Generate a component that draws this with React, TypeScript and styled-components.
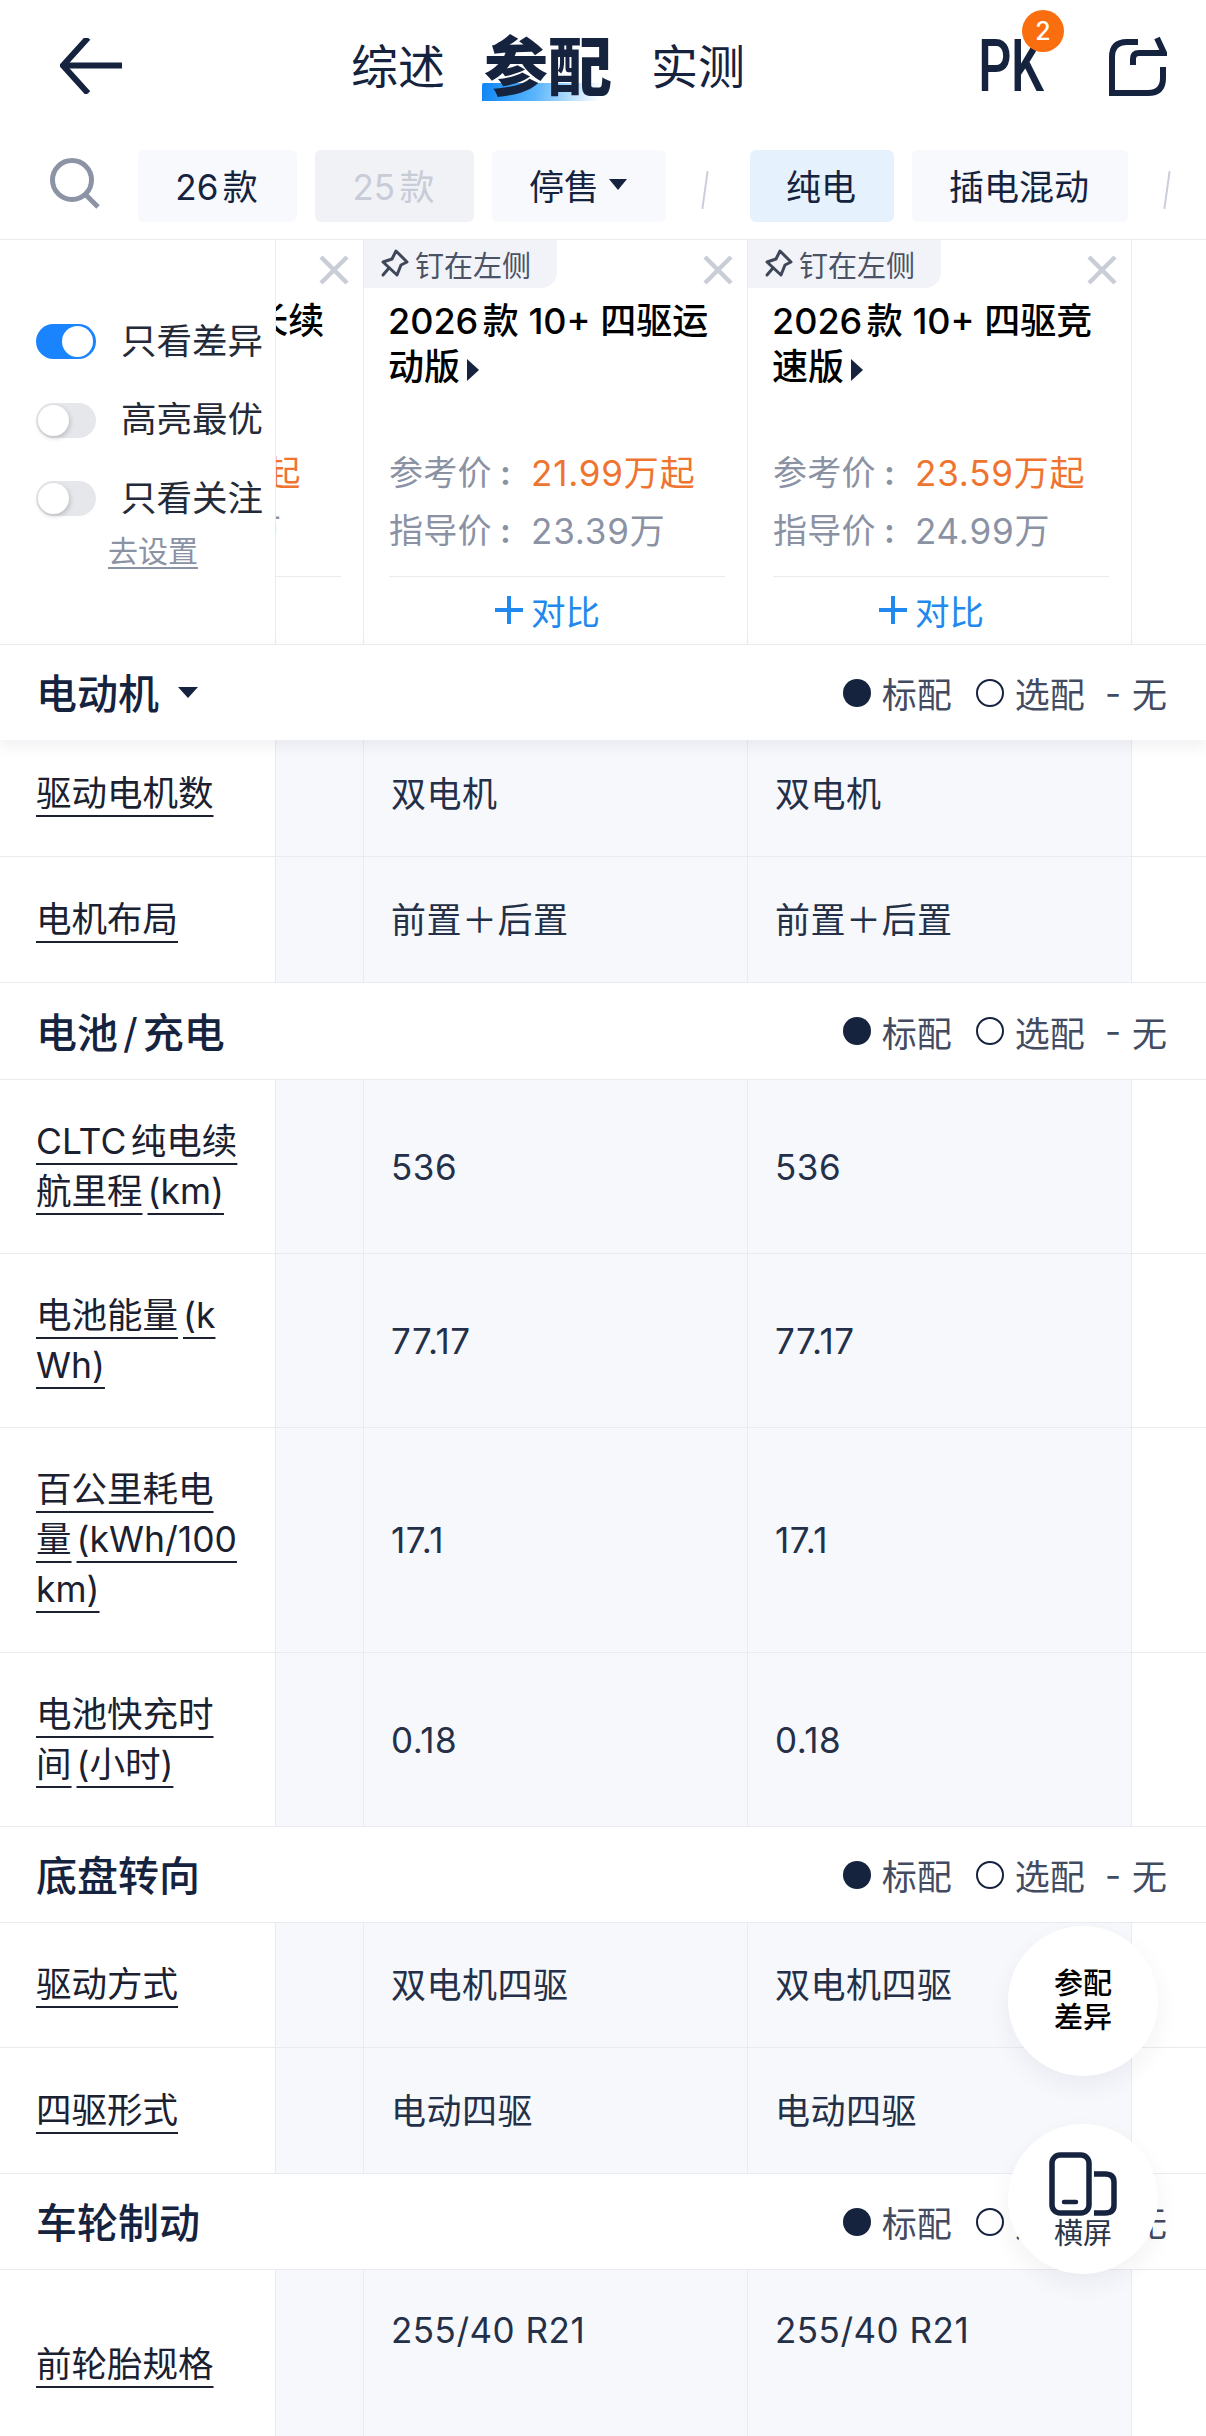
import React from "react";
import styled, { createGlobalStyle } from "styled-components";

const NAVY = "#15233f";
const LINE = "#e9ebf0";
const CELL = "#f7f8fc";
const FONT = `Inter, "Noto Sans CJK SC", sans-serif`;
const COLS = "276px 88px 384px 384px 1fr";

const Global = createGlobalStyle`
  html, body { margin: 0; padding: 0; background: #fff; }
  body { font-family: ${FONT}; color: ${NAVY}; text-autospace: normal; }
  * { box-sizing: border-box; }
`;

const Page = styled.div`
  width: 1206px;
  height: 2436px;
  overflow: hidden;
  position: relative;
  background: #fff;
`;

const TopBar = styled.header`
  height: 132px;
  display: flex;
  align-items: center;
  padding: 0 39px 0 60px;
`;
const BackIcon = styled.svg`
  width: 62px;
  height: 56px;
  flex: none;
  color: ${NAVY};
`;
const Tabs = styled.nav`
  margin: 2px 0 0 229px;
  display: flex;
  align-items: center;
  gap: 39px;
`;
const Tab = styled.span<{ $active?: boolean }>`
  position: relative;
  font-size: ${(p) => (p.$active ? 64 : 47)}px;
  font-weight: ${(p) => (p.$active ? 800 : 400)};
  line-height: 70px;
  color: ${NAVY};
  z-index: 0;
  ${(p) =>
    p.$active &&
    `&::after {
      content: "";
      position: absolute;
      z-index: -1;
      left: -2px;
      width: 117px;
      top: 51px;
      height: 18px;
      border-radius: 2px 0 0 0;
      background: linear-gradient(100deg, #0f86f5 0%, #58b4fb 45%, #ffffff 100%);
    }`}
`;
const RightTools = styled.div`
  margin-left: auto;
  display: flex;
  align-items: center;
  gap: 65px;
`;
const Pk = styled.div`
  position: relative;
  width: 64px;
  height: 52px;
`;
const PkText = styled.span`
  display: block;
  font-family: Roboto, sans-serif;
  font-size: 73px;
  line-height: 52px;
  font-weight: 500;
  transform: scaleX(0.72);
  transform-origin: left center;
  white-space: nowrap;
  color: ${NAVY};
  letter-spacing: -1px;
`;
const Badge = styled.span`
  position: absolute;
  left: 44px;
  top: -30px;
  width: 42px;
  height: 42px;
  border-radius: 50%;
  background: #fb6e0f;
  color: #fff;
  font-size: 25px;
  font-weight: 500;
  display: flex;
  align-items: center;
  justify-content: center;
`;
const ShareIcon = styled.svg`
  width: 60px;
  height: 60px;
  color: ${NAVY};
  flex: none;
`;

const FilterBar = styled.div`
  height: 108px;
  border-bottom: 1px solid ${LINE};
  display: flex;
  align-items: flex-start;
  padding: 18px 0 0 49px;
`;
const SearchIcon = styled.svg`
  width: 52px;
  height: 52px;
  margin: 7px 37px 0 0;
  flex: none;
  color: #8c93a5;
`;
const Chip = styled.span<{ $w: number; $state?: "off" | "on" }>`
  width: ${(p) => p.$w}px;
  height: 72px;
  margin-right: 18px;
  padding: 0 2px 3px 0;
  border-radius: 6px;
  flex: none;
  display: flex;
  align-items: center;
  justify-content: center;
  gap: 10px;
  font-size: 35px;
  white-space: nowrap;
  background: ${(p) => (p.$state === "off" ? "#f1f2f6" : p.$state === "on" ? "#e5f2fd" : "#f7f9fc")};
  color: ${(p) => (p.$state === "off" ? "#c8ccd6" : NAVY)};
`;
const ChipCaret = styled.i`
  width: 0;
  height: 0;
  border-left: 9px solid transparent;
  border-right: 9px solid transparent;
  border-top: 11px solid ${NAVY};
`;
const Slash = styled.span`
  width: 2px;
  height: 38px;
  margin: 21px 44px 0 20px;
  background: #c9ced8;
  transform: rotate(8deg);
  flex: none;
`;

const Row = styled.div<{ $h?: number; $tuck?: boolean }>`
  display: grid;
  grid-template-columns: ${COLS};
  height: ${(p) => p.$h ?? 126}px;
  border-top: 1px solid ${LINE};
  margin-top: ${(p) => (p.$tuck ? -10 : 0)}px;
`;
const Head = styled.div`
  display: grid;
  grid-template-columns: ${COLS};
  height: 404px;
`;
const SidePanel = styled.div`
  background: #fff;
  border-right: 1px solid ${LINE};
  padding: 84px 0 0 36px;
  display: flex;
  flex-direction: column;
`;
const ToggleRow = styled.div`
  display: flex;
  align-items: center;
  height: 35px;
  gap: 25px;
  margin-bottom: 43.5px;
  font-size: 35.5px;
  white-space: nowrap;
  color: #242a38;
`;
const ToggleLabel = styled.span`
  margin-top: -7px;
`;
const Track = styled.span<{ $on?: boolean }>`
  position: relative;
  width: 60px;
  height: 35px;
  border-radius: 18px;
  flex: none;
  background: ${(p) => (p.$on ? "#1a84ff" : "#e6e7eb")};
`;
const Knob = styled.span<{ $on?: boolean }>`
  position: absolute;
  top: 2px;
  left: ${(p) => (p.$on ? 26 : 2)}px;
  width: 31px;
  height: 31px;
  border-radius: 50%;
  background: #fff;
  box-shadow: ${(p) => (p.$on ? "none" : "1px 2px 5px rgba(0,0,0,.2)")};
`;
const SetupLink = styled.span`
  margin: -25px 0 0 72px;
  font-size: 30px;
  line-height: 32px;
  width: fit-content;
  color: #8a92a4;
  border-bottom: 2px solid #8a92a4;
`;
const ClipSlot = styled.div`
  overflow: hidden;
  display: flex;
  justify-content: flex-end;
`;
const CarCard = styled.div`
  position: relative;
  width: 384px;
  flex: none;
  border-right: 1px solid ${LINE};
  display: flex;
  flex-direction: column;
`;
const PinTab = styled.div`
  width: 193px;
  height: 48px;
  background: #f1f3f8;
  border-radius: 0 0 16px 0;
  display: flex;
  align-items: center;
  padding-left: 15px;
  gap: 6px;
  font-size: 29px;
  color: #4a5266;
  white-space: nowrap;
`;
const PinIcon = styled.svg`
  width: 30px;
  height: 32px;
  flex: none;
  color: #3f4759;
`;
const CloseIcon = styled.svg`
  position: absolute;
  right: 14px;
  top: 15px;
  width: 30px;
  height: 30px;
  color: #c9ced6;
`;
const CarTitle = styled.div`
  margin: 10px 25px 0 24px;
  height: 92px;
  font-size: 36px;
  line-height: 46px;
  font-weight: 500;
  color: #000;
`;
const TitleCaret = styled.i`
  display: inline-block;
  margin-left: 7px;
  width: 0;
  height: 0;
  border-top: 11px solid transparent;
  border-bottom: 11px solid transparent;
  border-left: 12px solid ${NAVY};
  vertical-align: -1px;
`;
const PriceBlock = styled.div`
  margin: 52px 0 0 25px;
`;
const PriceRow = styled.div`
  height: 57.5px;
  display: flex;
  align-items: center;
  font-size: 35px;
  white-space: nowrap;
  color: #8a92a4;
  text-autospace: no-autospace;
  letter-spacing: 0.8px;
`;
const PriceLabel = styled.span`
  width: 142px;
  flex: none;
  font-size: 34px;
  letter-spacing: 0.3px;
`;
const Colon = styled.span`
  margin-left: 8px;
  font-weight: 600;
`;
const Hot = styled.span`
  color: #ee7430;
`;
const CardFoot = styled.div`
  margin: 19px 22px 0 25px;
  padding-right: 20px;
  border-top: 1px solid ${LINE};
  height: 66px;
  display: flex;
  align-items: center;
  justify-content: center;
  gap: 7px;
  font-size: 34.5px;
  color: #2189ee;
`;
const PlusIcon = styled.svg`
  width: 30px;
  height: 30px;
  color: #2189ee;
`;
const HeadEnd = styled.div``;

const SectionBar = styled.div<{ $raised?: boolean; $h?: number }>`
  position: relative;
  z-index: ${(p) => (p.$raised ? 2 : 0)};
  height: ${(p) => p.$h ?? 96}px;
  background: #fff;
  border-top: 1px solid ${LINE};
  display: flex;
  align-items: center;
  justify-content: space-between;
  padding: 0 39px 0 36px;
  box-shadow: ${(p) => (p.$raised ? "0 6px 14px rgba(30,40,70,.07)" : "none")};
`;
const SectionTitle = styled.div`
  font-size: 41px;
  font-weight: 500;
  display: flex;
  align-items: center;
  gap: 19px;
  padding-bottom: 3px;
  color: ${NAVY};
`;
const SlashMark = styled.span`
  margin: 0 5px;
  font-weight: 400;
`;
const TitleDown = styled.i`
  width: 0;
  height: 0;
  border-left: 10px solid transparent;
  border-right: 10px solid transparent;
  border-top: 11px solid ${NAVY};
  margin-top: 2px;
`;
const Legend = styled.div`
  display: flex;
  align-items: center;
  font-size: 35px;
  color: #424b5f;
  white-space: nowrap;
`;
const Dot = styled.i<{ $hollow?: boolean }>`
  width: 28px;
  height: 28px;
  border-radius: 50%;
  margin-right: 11px;
  background: ${(p) => (p.$hollow ? "#fff" : NAVY)};
  border: ${(p) => (p.$hollow ? `2px solid ${NAVY}` : "none")};
`;
const LegendItem = styled.span<{ $gap: number }>`
  margin-right: ${(p) => p.$gap}px;
`;
const Dash = styled.span`
  margin-right: 11px;
`;

const LabelCell = styled.div`
  background: #fff;
  border-right: 1px solid ${LINE};
  padding: 0 0 0 36px;
  display: flex;
  align-items: center;
`;
const LabelText = styled.div`
  width: 211px;
  font-size: 35.5px;
  line-height: 50px;
  word-break: break-all;
  color: #1b2130;
`;
const Ul = styled.span`
  text-decoration: underline;
  text-decoration-thickness: 2px;
  text-underline-offset: 9px;
  text-decoration-skip-ink: none;
  & + & { margin-left: 5px; }
`;
const Spacer = styled.div`
  background: ${CELL};
  border-right: 1px solid ${LINE};
`;
const ValueCell = styled.div<{ $top?: boolean }>`
  background: ${CELL};
  border-right: 1px solid ${LINE};
  padding: ${(p) => (p.$top ? "37px 0 0 27px" : "0 0 0 27px")};
  display: flex;
  align-items: ${(p) => (p.$top ? "flex-start" : "center")};
  font-size: 35px;
  line-height: 46px;
  letter-spacing: 0.5px;
  color: #243048;
`;
const Blank = styled.div`
  background: #fff;
`;

const FloatStack = styled.div`
  position: absolute;
  right: 48px;
  bottom: 162px;
  z-index: 5;
  display: flex;
  flex-direction: column;
  gap: 48px;
`;
const FloatButton = styled.div`
  width: 150px;
  height: 150px;
  border-radius: 50%;
  background: #fff;
  box-shadow: 0 10px 24px rgba(30, 40, 70, 0.06);
  display: flex;
  flex-direction: column;
  align-items: center;
  justify-content: center;
  font-size: 29px;
  line-height: 34px;
  color: #000;
  font-weight: 500;
`;
const RotateIcon = styled.svg`
  width: 68px;
  height: 64px;
  margin-top: 4px;
  color: ${NAVY};
`;
const RotateLabel = styled.span`
  color: #2a3448;
  font-weight: 400;
  margin-top: 1px;
`;

const LegendBlock = () => (
  <Legend>
    <Dot />
    <LegendItem $gap={24}>标配</LegendItem>
    <Dot $hollow />
    <LegendItem $gap={20}>选配</LegendItem>
    <Dash>-</Dash>
    无
  </Legend>
);

const Card = ({ name, price, guide }: { name: string; price: string; guide: string }) => (
  <CarCard>
    <PinTab>
      <PinIcon viewBox="0 0 30 32" fill="none" stroke="currentColor" strokeWidth="3" strokeLinejoin="round">
        <path d="M17 3 L28 14 L22 17 L18 27 L4 14 L13 11 Z" />
        <path d="M10 20 L4 27" strokeLinecap="round" />
      </PinIcon>
      钉在左侧
    </PinTab>
    <CloseIcon viewBox="0 0 30 30" stroke="currentColor" strokeWidth="4.5" fill="none">
      <path d="M2 2 L28 28 M28 2 L2 28" />
    </CloseIcon>
    <CarTitle>
      {name}
      <TitleCaret />
    </CarTitle>
    <PriceBlock>
      <PriceRow>
        <PriceLabel>
          参考价<Colon>:</Colon>
        </PriceLabel>
        <Hot>{price}</Hot>
      </PriceRow>
      <PriceRow>
        <PriceLabel>
          指导价<Colon>:</Colon>
        </PriceLabel>
        {guide}
      </PriceRow>
    </PriceBlock>
    <CardFoot>
      <PlusIcon viewBox="0 0 30 30" stroke="currentColor" strokeWidth="4" fill="none">
        <path d="M15 1 V29 M1 15 H29" />
      </PlusIcon>
      对比
    </CardFoot>
  </CarCard>
);

const Toggle = ({ on, label }: { on?: boolean; label: string }) => (
  <ToggleRow>
    <Track $on={on}>
      <Knob $on={on} />
    </Track>
    <ToggleLabel>{label}</ToggleLabel>
  </ToggleRow>
);

const SpecRow = ({
  h,
  tuck,
  label,
  value,
  top,
}: {
  h?: number;
  tuck?: boolean;
  label: string[];
  value: string;
  top?: boolean;
}) => (
  <Row $h={h} $tuck={tuck}>
    <LabelCell>
      <LabelText>
        {label.map((t) => (
          <Ul key={t}>{t}</Ul>
        ))}
      </LabelText>
    </LabelCell>
    <Spacer />
    <ValueCell $top={top}>{value}</ValueCell>
    <ValueCell $top={top}>{value}</ValueCell>
    <Blank />
  </Row>
);

export default function App() {
  return (
    <Page>
      <Global />
      <TopBar>
        <BackIcon viewBox="0 0 62 56" fill="none" stroke="currentColor" strokeWidth="6">
          <path d="M26 2 L3 27.5 L26 53" strokeLinecap="square" />
          <path d="M5 27.5 H62" />
        </BackIcon>
        <Tabs>
          <Tab>综述</Tab>
          <Tab $active>参配</Tab>
          <Tab>实测</Tab>
        </Tabs>
        <RightTools>
          <Pk>
            <PkText>PK</PkText>
            <Badge>2</Badge>
          </Pk>
          <ShareIcon viewBox="0 0 60 60" fill="none" stroke="currentColor" strokeWidth="6">
            <path d="M31 6 H20 Q5 6 5 21 V57 H41 Q56 57 56 42 V31" />
            <path d="M26 29 V23 Q26 17 32 17 H57 L50 2" />
          </ShareIcon>
        </RightTools>
      </TopBar>

      <FilterBar>
        <SearchIcon viewBox="0 0 52 52" fill="none" stroke="currentColor" strokeWidth="5">
          <circle cx="23" cy="23" r="19.5" />
          <path d="M36 37 L49 50" />
        </SearchIcon>
        <Chip $w={159}>26款</Chip>
        <Chip $w={159} $state="off">
          25款
        </Chip>
        <Chip $w={174}>
          停售
          <ChipCaret />
        </Chip>
        <Slash />
        <Chip $w={144} $state="on">
          纯电
        </Chip>
        <Chip $w={216}>插电混动</Chip>
        <Slash />
      </FilterBar>

      <Head>
        <SidePanel>
          <Toggle on label="只看差异" />
          <Toggle label="高亮最优" />
          <Toggle label="只看关注" />
          <SetupLink>去设置</SetupLink>
        </SidePanel>
        <ClipSlot>
          <Card name="2026款 10+ 超长续航版" price="21.19万起" guide="22.89万" />
        </ClipSlot>
        <Card name="2026款 10+ 四驱运动版" price="21.99万起" guide="23.39万" />
        <Card name="2026款 10+ 四驱竞速版" price="23.59万起" guide="24.99万" />
        <HeadEnd />
      </Head>

      <SectionBar $raised>
        <SectionTitle>
          电动机
          <TitleDown />
        </SectionTitle>
        <LegendBlock />
      </SectionBar>
      <SpecRow tuck label={["驱动电机数"]} value="双电机" />
      <SpecRow label={["电机布局"]} value="前置＋后置" />

      <SectionBar $h={97}>
        <SectionTitle>
          <span>
            电池<SlashMark>/</SlashMark>充电
          </span>
        </SectionTitle>
        <LegendBlock />
      </SectionBar>
      <SpecRow h={174} label={["CLTC纯电续航里程", "(km)"]} value="536" />
      <SpecRow h={174} label={["电池能量", "(kWh)"]} value="77.17" />
      <SpecRow h={225} label={["百公里耗电量", "(kWh/100km)"]} value="17.1" />
      <SpecRow h={174} label={["电池快充时间", "(小时)"]} value="0.18" />

      <SectionBar>
        <SectionTitle>底盘转向</SectionTitle>
        <LegendBlock />
      </SectionBar>
      <SpecRow h={125} label={["驱动方式"]} value="双电机四驱" />
      <SpecRow label={["四驱形式"]} value="电动四驱" />

      <SectionBar>
        <SectionTitle>车轮制动</SectionTitle>
        <LegendBlock />
      </SectionBar>
      <SpecRow h={190} top label={["前轮胎规格"]} value="255/40 R21" />

      <FloatStack>
        <FloatButton>
          <span>参配</span>
          <span>差异</span>
        </FloatButton>
        <FloatButton>
          <RotateIcon viewBox="0 0 68 64" fill="none" stroke="currentColor" strokeWidth="5.5">
            <rect x="3" y="3" width="37" height="58" rx="8" />
            <path d="M15 50 H27" strokeWidth="4.5" strokeLinecap="round" />
            <path d="M45 22 H56 Q65 22 65 30 V53 Q65 61 56 61 H45" />
          </RotateIcon>
          <RotateLabel>横屏</RotateLabel>
        </FloatButton>
      </FloatStack>
    </Page>
  );
}
